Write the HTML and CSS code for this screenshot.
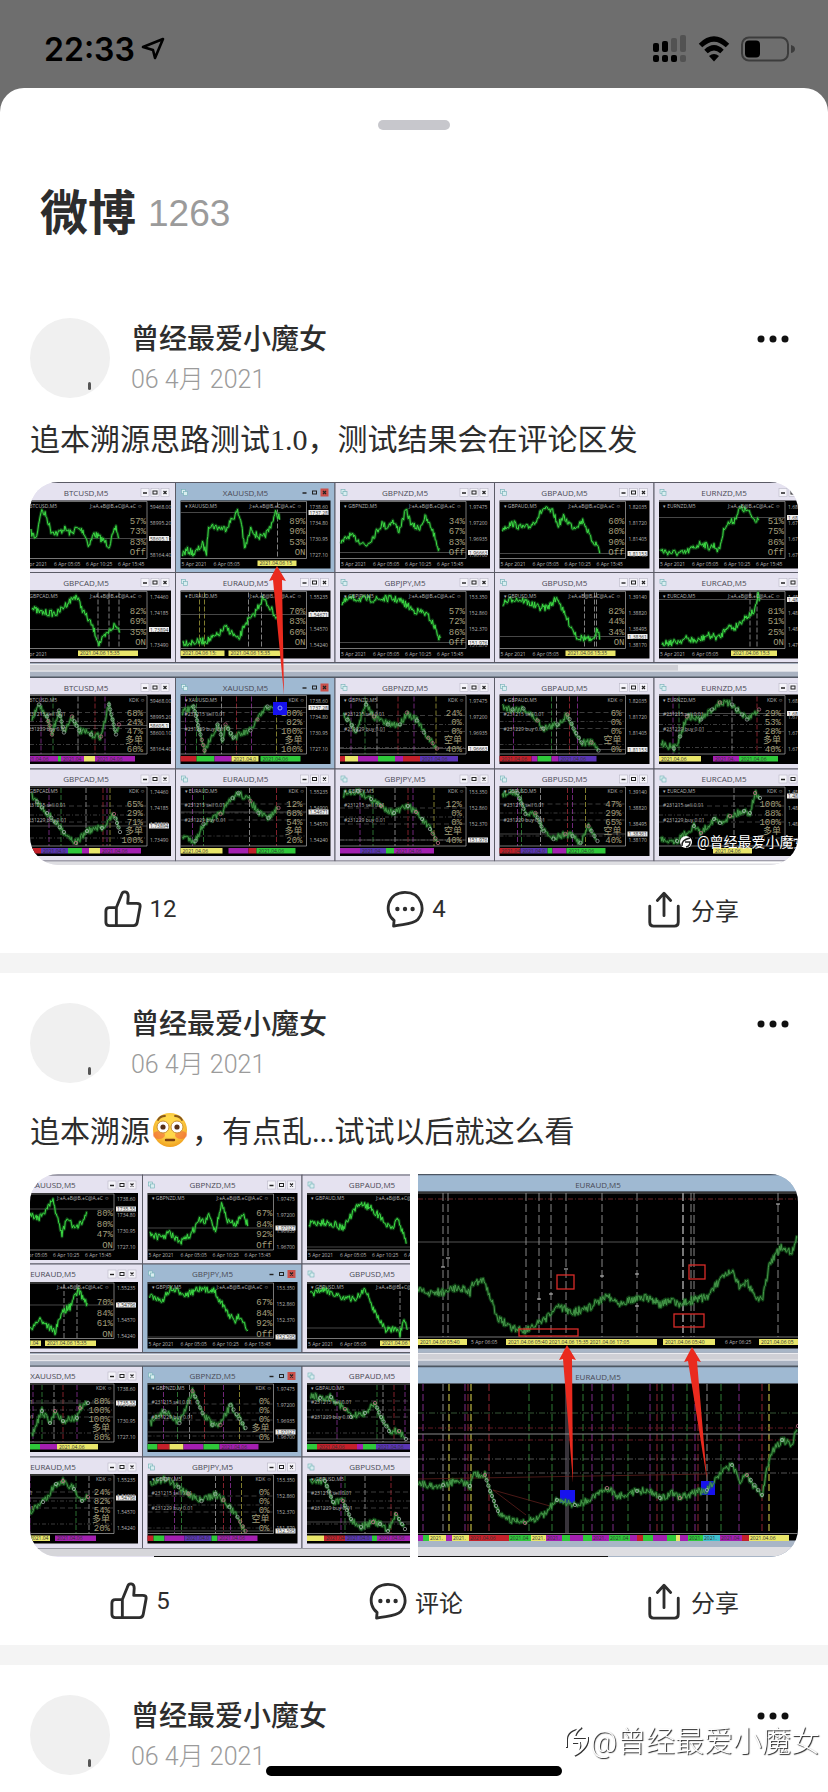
FILE: index.html
```
<!DOCTYPE html>
<html lang="zh-CN">
<head>
	<meta charset="UTF-8">
	<title>微博</title>
	<meta name="viewport" content="width=device-width, initial-scale=1.0">
	<link rel="stylesheet" href="styles.css">
</head>
<body>
	<!-- shared icons -->
	<svg class="sprite" aria-hidden="true">
		<symbol id="icon-like" viewBox="0 0 40 40">
			<path d="M13 18.500L18.500 5C19.500 .5 25.500 1 25.500 6.500L25 14H34.500Q38.500 14 38 17.500L35 34Q34.500 37.500 31 37.500H5.500Q2 37.500 2 34V22Q2 18.500 5.500 18.500H13V37.500"/>
		</symbol>
		<symbol id="icon-comment" viewBox="0 0 40 40">
			<path d="M8 38L8.500 32C-2.500 24 1 2.500 20 2.500C38 2.500 42.500 22 33.500 31C28 36.500 19 35.500 8 38Z"/>
			<g class="dots"><circle cx="12" cy="20" r="2.300"/><circle cx="20" cy="20" r="2.300"/><circle cx="28" cy="20" r="2.300"/></g>
		</symbol>
		<symbol id="icon-share" viewBox="0 0 40 40">
			<path d="M5 17V34Q5 38 9 38H31Q35 38 35 34V17M20 27V4M13 11L20 3.500L27 11"/>
		</symbol>
		<symbol id="icon-more" viewBox="0 0 32 8">
			<circle cx="4" cy="4" r="3.500"/><circle cx="16" cy="4" r="3.500"/><circle cx="28" cy="4" r="3.500"/>
		</symbol>
	</svg>

	<header class="status-bar">
		<div class="clock">
			<span>22:33</span>
			<svg width="24" height="24" viewBox="0 0 24 24"><path d="M22 2L14 21L12 13L2 10Z" fill="none" stroke="#000" stroke-width="2.600" stroke-linejoin="round"/></svg>
		</div>
		<div class="indicators">
			<svg width="36" height="28" viewBox="0 0 36 28">
				<rect x="1" y="8" width="6" height="9" rx="2"/><rect x="10" y="6" width="6" height="11" rx="2"/>
				<g opacity=".25"><rect x="19" y="3" width="6" height="14" rx="2"/><rect x="28" y="0" width="6" height="17" rx="2"/><rect x="28" y="20" width="6" height="7" rx="2"/></g>
				<rect x="1" y="20" width="6" height="7" rx="2"/><rect x="10" y="20" width="6" height="7" rx="2"/><rect x="19" y="20" width="6" height="7" rx="2"/>
			</svg>
			<svg width="32" height="26" viewBox="0 0 32 26">
				<path d="M2.500 9.500Q16 -3.500 29.500 9.500M8 15.500Q16 8 24 15.500" fill="none" stroke="#000" stroke-width="5"/>
				<path d="M11 20Q16 16 21 20L16 25.500Z"/>
			</svg>
			<svg width="56" height="26" viewBox="0 0 56 26">
				<rect x="2" y="1.500" width="46" height="23" rx="7" fill="none" stroke="#3c3c3c" stroke-width="2"/>
				<rect x="5" y="4.500" width="15" height="17" rx="4"/><path d="M51 9Q55 10 55 13T51 17Z" fill="#3c3c3c"/>
			</svg>
		</div>
	</header>

	<main class="sheet">
		<div class="handle"></div>
		<h1 class="title">微博 <span class="count">1263</span></h1>

		<article class="post">
			<div class="post-header">
				<div class="avatar"><span class="badge"></span></div>
				<div class="author">
					<h2 class="name">曾经最爱小魔女</h2>
					<p class="date">06 4月 2021</p>
				</div>
				<button class="more" aria-label="更多"><svg width="32" height="8"><use href="#icon-more"/></svg></button>
			</div>
			<p class="text">追本溯源思路测试1.0，测试结果会在评论区发</p>
			<div class="gallery">
				<svg id="chart-wall" viewBox="0 0 768 383"></svg>
			</div>
			<div class="actions">
				<button class="action"><svg class="icon"><use href="#icon-like"/></svg>12</button>
				<button class="action"><svg class="icon"><use href="#icon-comment"/></svg>4</button>
				<button class="action"><svg class="icon"><use href="#icon-share"/></svg>分享</button>
			</div>
		</article>

		<article class="post">
			<div class="post-header">
				<div class="avatar"><span class="badge"></span></div>
				<div class="author">
					<h2 class="name">曾经最爱小魔女</h2>
					<p class="date">06 4月 2021</p>
				</div>
				<button class="more" aria-label="更多"><svg width="32" height="8"><use href="#icon-more"/></svg></button>
			</div>
			<p class="text with-emoji">追本溯源<svg class="emoji" viewBox="0 0 36 36" role="img" aria-label="脸红">
				<defs><radialGradient id="face" cx=".5" cy=".4" r=".6"><stop offset=".5" stop-color="#ffd84a"/><stop offset="1" stop-color="#f0a020"/></radialGradient></defs>
				<circle cx="18" cy="18" r="17" fill="url(#face)"/>
				<ellipse cx="7" cy="23" rx="6" ry="4" fill="#f2683c" opacity=".6"/><ellipse cx="29" cy="23" rx="6" ry="4" fill="#f2683c" opacity=".6"/>
				<path d="M6 8Q8 4 13 4M23 4Q28 4 30 8" fill="none" stroke="#8a5a18" stroke-width="1.800" stroke-linecap="round"/>
				<circle cx="11" cy="15" r="6" fill="#fff" stroke="#c98d30"/><circle cx="25" cy="15" r="6" fill="#fff" stroke="#c98d30"/>
				<circle cx="11" cy="15" r="2.600" fill="#553018"/><circle cx="25" cy="15" r="2.600" fill="#553018"/>
				<path d="M14 28H22" stroke="#7a3d10" stroke-width="2.400" stroke-linecap="round"/>
			</svg>，有点乱...试试以后就这么看</p>
			<div class="gallery">
				<svg id="chart-crop" viewBox="0 0 380 383"></svg>
				<svg id="chart-euraud" viewBox="0 0 380 383"></svg>
			</div>
			<div class="actions">
				<button class="action"><svg class="icon"><use href="#icon-like"/></svg>5</button>
				<button class="action"><svg class="icon"><use href="#icon-comment"/></svg>评论</button>
				<button class="action"><svg class="icon"><use href="#icon-share"/></svg>分享</button>
			</div>
		</article>

		<article class="post">
			<div class="post-header">
				<div class="avatar"><span class="badge"></span></div>
				<div class="author">
					<h2 class="name">曾经最爱小魔女</h2>
					<p class="date">06 4月 2021</p>
				</div>
				<button class="more" aria-label="更多"><svg width="32" height="8"><use href="#icon-more"/></svg></button>
			</div>
		</article>
	</main>

	<div class="watermark">
		<svg width="28" height="36" viewBox="0 0 28 36"><g fill="none" stroke-width="2"><path d="M4 24V16Q4 6 19 4Q13 8 12 14H25Q26 24 12 32Q19 25 17 19H10" stroke="#333"/><path d="M3 23V15Q3 5 18 3Q12 7 11 13H24Q25 23 11 31Q18 24 16 18H9" stroke="#fff"/></g></svg>
		<span>@曾经最爱小魔女</span>
	</div>
	<div class="home-indicator"></div>

	<script src="charts.js"></script>
</body>
</html>
```
FILE: styles.css
```
* {
	box-sizing: border-box;
}

body {
	display: flex;
	flex-direction: column;
	min-height: 100vh;
	margin: 0;
	background-color: #6e6e6e;
	color: #2d2d2d;
	font-family: Roboto, "Noto Sans CJK SC", sans-serif;
}

h1,
h2,
p {
	margin: 0;
}

button {
	padding: 0;
	border: none;
	background: none;
	color: inherit;
	font: inherit;
}

.sprite {
	position: absolute;
	width: 0;
	height: 0;
}

/* status bar */
.status-bar {
	display: flex;
	justify-content: space-between;
	align-items: center;
	height: 88px;
	padding: 10px 32px 0 44px;
	color: #000;
}

.clock {
	display: flex;
	align-items: center;
	gap: 6px;
	font-family: Inter, sans-serif;
	font-size: 32px;
	font-weight: 600;
}

.indicators {
	display: flex;
	align-items: center;
	gap: 10px;
}

/* sheet */
.sheet {
	flex: 1;
	padding-top: 32px;
	border-radius: 24px 24px 0 0;
	background-color: #fff;
}

.handle {
	width: 72px;
	height: 10px;
	margin: 0 auto;
	border-radius: 5px;
	background-color: #c7c7cc;
}

.title {
	display: flex;
	align-items: center;
	gap: 12px;
	padding: 56px 40px 46px;
	font-size: 48px;
	font-weight: 700;
	line-height: 56px;
}

.count {
	color: #9b9b9b;
	font-family: "Liberation Sans", sans-serif;
	font-size: 37px;
	font-weight: 400;
}

/* posts */
.post {
	padding: 30px 30px 0;
	border-bottom: 20px solid #f4f4f4;
}

.post:last-child {
	padding-bottom: 16px;
	border-bottom: none;
}

.post-header {
	display: flex;
	gap: 21px;
	height: 80px;
}

.avatar {
	position: relative;
	width: 80px;
	height: 80px;
	border-radius: 50%;
	background-color: #f0f0f0;
}

.badge {
	position: absolute;
	right: 19px;
	bottom: 8px;
	width: 3px;
	height: 8px;
	border-radius: 2px;
	background-color: #555;
}

.author {
	flex: 1;
	padding-top: 2px;
	line-height: 40px;
}

.name {
	font-size: 28px;
	font-weight: 500;
}

.date {
	color: #9b9b9b;
	font-size: 25px;
	font-weight: 300;
}

.more {
	align-self: flex-start;
	height: 42px;
	margin-right: 9px;
}

.more svg {
	display: block;
	fill: #111;
}

.text {
	margin: 22px 0;
	font-family: "Liberation Serif", "Noto Sans CJK SC", serif;
	font-size: 30px;
	line-height: 40px;
}

.with-emoji {
	padding-top: 7px;
}

.emoji {
	width: 36px;
	height: 36px;
	margin: -2px 4px 0 2px;
	vertical-align: -6px;
}

.gallery {
	display: flex;
	gap: 8px;
	overflow: hidden;
	border-radius: 28px;
}

.gallery svg {
	display: block;
	flex: 1;
	min-width: 0;
}

.actions {
	display: grid;
	grid-template-columns: repeat(3, 1fr);
	height: 88px;
	margin: 0 -32px 0 -28px;
}

.action {
	display: flex;
	justify-content: center;
	align-items: center;
	gap: 8px;
	font-size: 24px;
}

.icon {
	width: 38px;
	height: 38px;
	fill: none;
	stroke: #2d2d2d;
	stroke-width: 3;
	stroke-linecap: round;
	stroke-linejoin: round;
}

.dots {
	fill: #2d2d2d;
	stroke: none;
}

/* overlays */
.watermark {
	position: fixed;
	right: 8px;
	bottom: 30px;
	display: flex;
	align-items: center;
	color: #fff;
	font-size: 29px;
	font-weight: 300;
	line-height: 40px;
	text-shadow: 1px 1px 1px #222;
}

.home-indicator {
	position: fixed;
	bottom: 16px;
	left: 50%;
	width: 296px;
	height: 10px;
	margin-left: -148px;
	border-radius: 5px;
	background-color: #000;
}

/* chart windows */
.win-title {
	fill: #4a4a55;
	font: 8px "Open Sans", sans-serif;
	text-anchor: middle;
}

.tiny {
	fill: #b4b4b4;
	font: 5px "Open Sans", sans-serif;
}

.percent {
	fill: #a39f7c;
	font: 9px "Liberation Mono", "Noto Sans CJK SC", monospace;
	text-anchor: end;
}

.dark {
	fill: #333;
}

.glow {
	fill: none;
	stroke: #1c7a26;
	stroke-width: 3;
	stroke-linejoin: round;
	opacity: 0.5;
}

.price-line {
	fill: none;
	stroke: #3ddc45;
	stroke-width: 1;
	stroke-linejoin: round;
}

.price-line.muted {
	stroke: #46994a;
}

.photo-mark {
	fill: #fff;
	font: 14px Roboto, "Noto Sans CJK SC", sans-serif;
}
```
FILE: charts.js
```
const PURPLE = "#a31fb0", GREEN = "#2fc83a", YELLOW = "#e9e66a", RED = "#c3202a", VIOLET = "#5a35b5";

let seed = 7;
function random() {
	seed = (seed * 16807) % 2147483647;
	return seed / 2147483647;
}

// spreads small price jumps along the key points
function pricePath(points, noise) {
	const out = [];
	for (let i = 0; i < points.length - 1; i++) {
		const [x1, y1] = points[i];
		const [x2, y2] = points[i + 1];
		const steps = Math.max(2, Math.round((x2 - x1) / 0.8));
		for (let s = 0; s < steps; s++) {
			const t = s / steps;
			const y = y1 + (y2 - y1) * t + (random() - 0.5) * noise;
			out.push((x1 + (x2 - x1) * t).toFixed(1) + "," + y.toFixed(1));
		}
	}
	return out.join(" ");
}

function priceLine(points, noise, muted) {
	const path = pricePath(points, noise);
	return `<polyline class="glow" points="${path}"/><polyline class="price-line ${muted ? "muted" : ""}" points="${path}"/>`;
}

function pairs(text) {
	return text.split(" ").map(p => p.split(",").map(Number));
}

function rect(x, y, w, h, fill, extra = "") {
	return `<rect x="${x}" y="${y}" width="${w}" height="${h}" fill="${fill}" ${extra}/>`;
}

function line(x1, y1, x2, y2, color, dash = "", width = 0.7) {
	return `<path d="M${x1} ${y1}L${x2} ${y2}" stroke="${color}" stroke-width="${width}" stroke-dasharray="${dash}"/>`;
}

function text(x, y, value, cls) {
	return `<text x="${x}" y="${y}" class="${cls}">${value}</text>`;
}

function markers(points) {
	let s = "";
	points.forEach(([x, y], i) => {
		if (i === 0) return;
		const [px, py] = points[i - 1];
		const n = y - py > 12 ? Math.round((y - py) / 5) : 1;
		for (let k = 1; k <= n; k++) {
			const color = i % 3 ? "#aab8b4" : "#c9708c";
			s += `<circle cx="${px + (x - px) * k / n}" cy="${py + (y - py) * k / n}" r="1.7" fill="none" stroke="${color}" stroke-width=".7"/>`;
		}
	});
	return s;
}

function drawWindow(x, y, h, w) {
	const top = w.orders ? 17 : 18;
	const ch = h - 22;
	let s = `<g transform="translate(${x} ${y})">`;
	s += rect(0, 0, 159.5, h, w.active ? "#9fb9d2" : "#e5e2f0", 'stroke="#5b5b66" stroke-width="1"');
	s += text(70, 13, w.name + ",M5", "win-title");
	s += rect(6, 7, 4, 4, "#d9eef0", 'stroke="#70aeb4" stroke-width=".6"') + rect(8, 9, 4, 4, "#d9eef0", 'stroke="#70aeb4" stroke-width=".6"');
	[125, 135, 145].forEach((bx, i) => {
		const fill = w.active ? (i === 2 ? "#c9504a" : "#9fb9d2") : "#f5f4fa";
		s += rect(bx, 6, 8, 8, fill, w.active ? "" : 'stroke="#b9b7c6" stroke-width=".6"');
	});
	s += line(127, 10.5, 131, 10.5, "#222", "", 1.4) + rect(137, 8.5, 4, 3, "none", 'stroke="#222"');
	s += '<path d="M147.500 8.500l3 3m0-3l-3 3" stroke="#222" stroke-width="1.2"/>';
	s += `<g transform="translate(5 ${top})">` + rect(0, 0, 150, ch, "#000");
	const base = ch - 10;

	// order windows carry coloured guides, plain ones just a few grey ones
	const guides = w.guides || [];
	guides.forEach(([gx, color]) => { s += line(gx, 2, gx, base, color, "5 2", 0.9); });
	if (w.orders) {
		[18, 27, 34, 50].forEach((gy, i) => {
			const ly = gy + (w.name.charCodeAt(3) % 5);
			s += line(0, ly, 126, ly, "#777", i % 2 ? "4 2 1 2" : "5 3", 0.5);
		});
	}
	s += line(0, w.price, 126, w.price, "#777", "", 0.6);
	s += line(0, 1, 126, 1, "#999") + line(126, 1, 126, base, "#aaa") + line(0, base, 126, base, "#aaa");
	s += priceLine(w.points, w.orders ? 7 : 7, w.orders);
	if (w.orders) {
		s += markers(w.points);
		s += text(4, 21, "#231215 sell 0.01", "tiny") + text(4, 36, "#231229 buy 0.01", "tiny");
	}
	s += text(4, 7, "▾ " + w.name + ",M5", "tiny");
	s += text(w.orders ? 108 : 69, 7, w.orders ? "KDK ☺" : "J:±A,±B@B,±C@A,±C ☺", "tiny");
	w.pct.forEach((p, i) => {
		const step = w.orders ? 9 : 10.5;
		s += text(w.orders ? 122 : 125, (w.orders ? 21 : 23) + i * step, p, "percent");
	});
	w.axis.forEach((a, i) => { s += text(129, 8 + i * 16, a, "tiny"); });
	s += rect(128, w.price - 2.5, 20, 5, "#eee") + text(129, w.price + 2, w.tag, "tiny dark");
	if (w.bands) {
		w.bands.forEach(([bx, bw, color]) => { s += rect(bx, base + 2, bw, 5.5, color) + (bw > 20 ? text(bx + 2, base + 6.5, "2021.04.06".slice(0, Math.floor(bw / 3)), "tiny dark") : ""); });
	}
	if (!w.orders) {
		const yellow = w.yellow || [];
		["5 Apr 2021", "6 Apr 05:05", "6 Apr 10:25", "6 Apr 15:45"].forEach((d, i) => {
			const dx = 1 + i * 32;
			if (!yellow.some(([bx, bw]) => dx < bx + bw && dx + 26 > bx)) s += text(dx, base + 7, d, "tiny");
		});
		yellow.forEach(([bx, bw]) => {
			s += rect(bx, base + 2, bw, 5.5, YELLOW) + text(bx + 2, base + 6.5, "2021.04.06 15:35".slice(0, Math.floor(bw / 3)), "tiny dark");
		});
	}
	return s + "</g></g>";
}

function scrollBar(y, h, w, thumb) {
	return rect(0, y, w, h, "#a9b2c1") + rect(0, y + 1, w, h * 0.55, "#ececf0") + rect(0, y + 2, thumb, h * 0.4, "#cfcfd5") +
		line(0, y + h, w, y + h, "#4c5663", "", 1.2);
}

function arrow(tipX, tipY, endX, endY) {
	return `<path d="M${tipX} ${tipY}L${tipX + 9} ${tipY + 15}L${tipX + 5} ${tipY + 14}L${endX} ${endY}L${tipX - 4} ${tipY + 14}L${tipX - 8} ${tipY + 15}Z" fill="#ea2a1e"/>`;
}

const P = "#7c2a86", G = "#2f7a35", W = "#8d8d8d", R = "#8e2430", Y = "#8f8a33";

function orderGuides(...xs) {
	const colors = [P, G, W, R, P, Y];
	return xs.map((x, i) => [x, colors[i % colors.length]]);
}

function win(name, points, pct, axis, tag, price, more = {}) {
	return Object.assign({ name, points: pairs(points), pct: pct.split(" "), axis: axis.split(" "), tag, price }, more);
}

const AX = {
	btc: "59468.00 58995.20 58600.10 58164.40", xau: "1738.60 1734.80 1730.95 1727.10", nzd: "1.97475 1.97200 1.96935 1.96700",
	aud: "1.82035 1.81720 1.81405 1.81100", enz: "1.68 1.67 1.67 1.67", cad: "1.74460 1.74185 1.73800 1.73490",
	eau: "1.55235 1.54900 1.54570 1.54240", jpy: "153.350 152.860 152.370 151.870", usd: "1.39140 1.38820 1.38495 1.38170", eca: "1.48 1.48 1.48 1.47"
};

const usdLine = "3,13 14,8 24,10 39,17 48,17 58,7 64,22 71,35 78,47 88,48 93,52 97,40 101,48";
const ordAud = "3,12 13,15 24,14 38,26 44,34 58,30 68,20 74,34 82,48 92,48 99,56";
const ordEur = "2,50 15,55 23,38 40,28 52,12 58,7 70,15 78,27 88,32 98,22";
const ordJpy = "3,8 18,5 31,13 41,20 54,27 68,20 76,26 82,33 90,43 98,57";
const ordUsd = "3,8 18,7 26,28 36,27 44,45 54,53 66,48 73,50 81,57 89,40 98,55";

const wall = [
	[
		win("BTCUSD", "10,32 15,38 20,10 25,15 30,30 37,33 43,28 50,33 55,28 62,30 68,45 73,33 80,38 88,45 95,27 99,42", "57% 73% 83% Off", AX.btc, "58605.11", 38),
		win("XAUUSD", "2,53 7,50 14,53 22,44 26,52 28,24 37,27 45,28 57,11 61,22 64,49 71,27 75,34 82,38 88,30 95,13 100,17", "89% 90% 53% ON", AX.xau, "1737.28", 12, { active: true, yellow: [[77, 39]], guides: [[97, W]] }),
		win("GBPNZD", "1,43 9,35 16,38 26,45 34,35 42,23 47,27 52,20 59,30 66,10 72,25 79,28 85,17 92,28 100,53", "34% 67% 83% Off", AX.nzd, "1.96663", 52),
		win("GBPAUD", "3,28 8,25 14,23 21,27 29,27 36,20 44,8 54,12 58,25 64,17 74,27 84,20 91,38 98,45 101,53", "60% 80% 90% Off", AX.aud, "1.81153", 53),
		win("EURNZD", "1,50 11,52 25,53 35,47 43,42 50,47 55,45 60,50 63,37 66,25 75,20 81,8 88,10 96,20 101,15", "51% 75% 86% Off", AX.enz, "1.68", 17)
	],
	[
		win("GBPCAD", "11,18 20,22 36,23 46,13 55,5 63,22 71,35 78,53 85,45 93,35 100,40", "82% 69% 35% ON", AX.cad, "1.73894", 39, { yellow: [[57, 60]], guides: [[77, W], [88, W], [98, W]] }),
		win("EURAUD", "2,52 13,52 27,50 37,45 45,37 52,43 58,50 65,32 72,27 82,8 88,15 97,28", "70% 83% 60% ON", AX.eau, "1.54671", 24, { yellow: [[0, 44], [48, 52]], guides: [[19, Y], [24, Y], [68, W], [81, W]] }),
		win("GBPJPY", "2,13 10,8 34,9 50,8 60,10 70,17 73,20 84,22 90,28 95,37 101,52", "57% 72% 86% Off", AX.jpy, "151.976", 52),
		win("GBPUSD", usdLine, "82% 44% 34% ON", AX.usd, "1.38361", 46, { yellow: [[66, 50]], guides: [[85, W], [95, W], [97, W]] }),
		win("EURCAD", "3,52 15,52 28,48 38,51 48,45 61,47 68,35 75,38 85,28 96,20 99,5 101,10", "81% 51% 25% ON", AX.eca, "1.48", 9, { yellow: [[72, 46]], guides: [[91, W], [98, W]] })
	],
	[
		win("BTCUSD", "11,26 18,10 26,22 31,40 38,16 43,38 51,22 58,36 70,40 80,42 88,10 95,40 98,30", "68% 24% 47% 多单 60%", AX.btc, "58605.11", 31, { bands: [[0, 37, PURPLE], [37, 3, GREEN], [40, 23, PURPLE], [63, 11, YELLOW], [74, 40, PURPLE]], guides: orderGuides(20, 32, 57, 74, 84) }),
		win("XAUUSD", "2,18 13,12 20,40 24,56 37,30 42,45 45,30 53,43 70,36 77,25 87,12 97,18 101,12", "100% 82% 100% 多单 100%", AX.xau, "1737.28", 13, { active: true, bands: [[0, 16, RED], [16, 18, GREEN], [34, 17, PURPLE], [51, 27, YELLOW], [80, 40, GREEN]], guides: orderGuides(5, 16, 41, 56, 71, 96) }),
		win("GBPNZD", "3,20 16,36 26,10 34,22 48,30 60,30 67,18 77,26 84,38 97,54", "24% 0% 0% 空单 40%", AX.nzd, "1.96663", 54, { bands: [[0, 5, RED], [5, 13, YELLOW], [18, 20, PURPLE], [38, 17, GREEN], [55, 8, PURPLE], [63, 17, RED], [80, 38, VIOLET]], guides: orderGuides(11, 25, 37, 58, 74, 96) }),
		win("GBPAUD", ordAud, "6% 0% 0% 空单 0%", AX.aud, "1.81153", 55, { bands: [[0, 32, RED], [32, 6, PURPLE], [38, 14, GREEN], [52, 7, PURPLE], [59, 38, VIOLET]], guides: orderGuides(14, 52, 57, 70, 78) }),
		win("EURNZD", "2,48 15,54 21,42 28,22 42,25 53,15 61,8 73,10 88,25 100,15", "29% 53% 28% 多单 40%", AX.enz, "1.68", 19, { bands: [[0, 42, YELLOW], [54, 26, PURPLE], [80, 39, GREEN]], guides: orderGuides(14, 20, 73, 98) })
	],
	[
		win("GBPCAD", "11,10 26,27 43,46 55,57 66,45 81,42 93,28 99,46", "65% 29% 71% 多单 100%", AX.cad, "1.73894", 40, { bands: [[0, 20, RED], [20, 27, VIOLET], [47, 14, GREEN], [61, 7, PURPLE], [68, 11, YELLOW], [79, 41, PURPLE]], guides: orderGuides(28, 40, 65, 82, 86, 89) }),
		win("EURAUD", ordEur, "12% 68% 54% 多单 20%", AX.eau, "1.54671", 26, { bands: [[0, 42, YELLOW], [48, 20, PURPLE], [68, 8, RED], [76, 39, GREEN]], guides: orderGuides(12, 23, 69, 96) }),
		win("GBPJPY", ordJpy, "12% 0% 0% 空单 40%", AX.jpy, "151.976", 54, { bands: [[0, 20, PURPLE], [20, 26, VIOLET], [46, 8, GREEN], [54, 40, PURPLE]], guides: orderGuides(20, 33, 55, 68, 73, 94) }),
		win("GBPUSD", ordUsd, "47% 29% 65% 空单 40%", AX.usd, "1.38361", 48, { bands: [[0, 21, RED], [21, 27, VIOLET], [48, 5, GREEN], [53, 14, PURPLE], [67, 39, GREEN]], guides: orderGuides(18, 22, 41, 68, 73, 86) }),
		win("EURCAD", "2,53 18,55 35,40 42,47 55,33 61,37 71,30 85,25 91,27 96,7 101,12", "100% 88% 100% 多单", AX.eca, "1.48", 10, { bands: [[54, 39, YELLOW]], guides: [[75, W]] })
	]
];

const crop = [
	[
		win("XAUUSD", "42,22 52,25 65,8 74,42 79,25 85,33 90,35 100,18", "80% 80% 47% ON", AX.xau, "1735.55", 16),
		win("GBPNZD", "2,40 13,45 22,40 33,50 43,42 52,27 57,30 62,22 68,38 74,10 80,28 88,32 94,20 101,33", "67% 84% 92% Off", AX.nzd, "1.97027", 35),
		win("GBPAUD", "2,30 14,30 24,30 36,35 44,23 53,10 64,15 74,25 84,37 91,25 100,53", "60% 80% 90% Off", AX.aud, "1.81153", 54)
	],
	[
		win("EURAUD", "42,47 52,37 67,50 74,30 82,25 90,8 100,23", "70% 84% 61% ON", AX.eau, "1.54796", 23, { yellow: [[30, 23], [57, 51]], guides: [[76, W], [89, W]] }),
		win("GBPJPY", "2,13 13,20 23,8 40,12 50,8 67,8 73,20 80,30 87,40 93,33 101,53", "67% 84% 92% Off", AX.jpy, "152.595", 55, { active: true }),
		win("GBPUSD", usdLine, "82% 44% 34% ON", AX.usd, "1.38361", 46, { yellow: [[73, 50]], guides: [[93, W]] })
	],
	[
		win("XAUUSD", "44,52 54,28 62,40 67,28 75,38 89,35 92,25 100,20", "80% 100% 100% 多单 80%", AX.xau, "1735.55", 20, { bands: [[40, 12, GREEN], [52, 17, PURPLE], [69, 41, YELLOW]], guides: orderGuides(45, 54, 66, 75, 89) }),
		win("GBPNZD", "3,40 17,28 32,40 45,8 55,30 65,42 73,42 83,22 98,45", "0% 0% 0% 多单 0%", AX.nzd, "1.97027", 49, { active: true, bands: [[0, 10, GREEN], [10, 12, RED], [22, 14, YELLOW], [36, 20, PURPLE], [56, 16, GREEN], [72, 39, PURPLE]], guides: orderGuides(16, 30, 42, 57, 76, 92) }),
		win("GBPAUD", ordAud, "6% 0% 0% 空单 0%", AX.aud, "1.81153", 56, { bands: [[0, 10, GREEN], [10, 40, RED], [50, 6, PURPLE], [56, 13, GREEN], [69, 50, VIOLET]], guides: orderGuides(30, 70, 76, 87, 98) })
	],
	[
		win("EURAUD", "42,38 55,28 68,10 75,7 86,15 94,27 100,23", "24% 82% 54% 多单 20%", AX.eau, "1.54796", 24, { bands: [[40, 22, YELLOW], [67, 41, PURPLE]], guides: orderGuides(42, 88, 101) }),
		win("GBPJPY", ordJpy, "0% 0% 0% 空单 0%", AX.jpy, "152.595", 57, { bands: [[0, 6, RED], [6, 11, GREEN], [17, 20, PURPLE], [37, 27, VIOLET], [64, 6, GREEN], [70, 40, PURPLE]], guides: orderGuides(27, 34, 68, 76, 83, 94) }),
		win("GBPUSD", ordUsd, "47% 29% 65% 空单 40%", AX.usd, "1.38361", 48, { bands: [[0, 17, YELLOW], [17, 21, RED], [38, 27, VIOLET], [65, 5, GREEN], [70, 36, PURPLE]], guides: orderGuides(34, 38, 58, 84) })
	]
];

function drawWall(rows, x0, tops, heights) {
	return rows.map((row, r) => row.map((w, c) => {
		if (r > 1) w.orders = true;
		return drawWindow(x0 + c * 159.5, tops[r], heights[r], w);
	}).join("")).join("");
}

document.getElementById("chart-wall").innerHTML =
	rect(0, 0, 768, 383, "#e5e2f0") +
	drawWall(wall, -14, [0.5, 90.5, 195.5, 287], [90, 90, 91.5, 92]) +
	scrollBar(181, 14, 768, 648) + rect(0, 379.5, 768, 4, "#dedee2") + rect(650, 379.5, 118, 2, "#fff") +
	rect(243, 220, 14, 13, "#1712ee") + '<circle cx="250" cy="226" r="2" fill="none" stroke="#8da0ff"/>' +
	arrow(247, 84, 254, 213) +
	'<circle cx="656" cy="360" r="6" fill="#fff"/><path d="M652 364q-1-6 8-8m-5 4h5q0 4-4 5" fill="none" stroke="#222" stroke-width="1.4"/>' +
	text(667, 365, "@曾经最爱小魔女", "photo-mark");

document.getElementById("chart-crop").innerHTML =
	rect(0, 0, 380, 383, "#e5e2f0") +
	drawWall(crop, -47, [1, 90, 192, 283], [89, 88.5, 91, 91.5]) +
	scrollBar(179, 13, 380, 380) + rect(0, 374.5, 380, 7.500, "#d6d6da") + rect(124, 382, 256, 1, "#111");

// one wide EURAUD chart, drawn twice: plain above, with orders below
const wide = pairs("0,116 12,119 25,118 42,113 52,119 55,108 67,108 72,124 80,144 92,153 107,156 125,148 139,133 149,136 157,138 172,133 189,121 200,129 219,124 232,124 242,131 255,126 262,131 275,126 289,123 302,106 314,98 322,114 329,108 335,118 344,128 352,88 364,73 374,78 380,59");

function wideFrame(top) {
	return rect(0, top, 380, 17, "#9fb9d2") + line(0, top, 380, top, "#4c5663", "", 1.5) +
		text(180, top + 13, "EURAUD,M5", "win-title") + rect(0, top + 17, 380, 157, "#000");
}

function drawWide() {
	let s = rect(0, 0, 380, 383, "#a8b5c6") + wideFrame(0.5) + wideFrame(192.5);
	s += line(0, 19, 380, 19, "#999") + line(0, 163, 380, 163, "#aaa");
	s += line(0, 25, 380, 25, "#9c3438", "5 2 1 2") + line(0, 68, 380, 68, "#777");
	[25, 30, 108, 121, 133, 148, 184, 219, 265, 273, 276, 360].forEach(x => {
		s += line(x, 19, x, 163, "#969696", "8 3", x === 265 ? 1.6 : 0.9);
	});
	[[25, 93], [30, 84], [121, 125], [133, 120], [148, 95], [184, 102], [219, 100], [219, 132], [360, 30]].forEach(([x, y]) => {
		s += line(x - 2, y, x + 2, y, "#ccc", "", 1);
	});
	s += priceLine(wide, 8, true);
	[[0, 49], [88, 151], [245, 52], [341, 39]].forEach(([x, w]) => {
		s += rect(x, 165, w, 6, YELLOW) + text(x + 2, 170, "2021.04.06 05:40 2021.04.06 15:35 2021.04.06 17:05".slice(0, Math.floor(w / 3)), "tiny dark");
	});
	s += text(53, 170, "5 Apr 06:05", "tiny") + text(307, 170, "6 Apr 06:25", "tiny");
	[[139, 101, 17, 14], [271, 91, 16, 14], [101, 155, 59, 7], [256, 140, 30, 13]].forEach(b => {
		s += rect(...b, "none", 'stroke="#d92c28" stroke-width="1.3"');
	});

	// lower half
	const guides = [[5, P], [25, W], [31, Y], [47, P], [50, R], [53, Y], [71, R], [111, G], [134, G], [165, G], [174, P], [184, G], [195, P], [210, G], [232, P], [239, R], [244, G], [255, P], [269, G], [277, P], [280, R], [289, W], [303, G], [321, P], [344, R], [351, Y]];
	s += rect(147, 209, 4, 150, "#37333a");
	guides.forEach(([x, color]) => { s += line(x, 210, x, 359, color, "7 3", color === Y ? 1.6 : 1); });
	s += line(0, 239, 380, 239, "#4c7a4c", "6 2 1 2") + line(0, 254, 380, 254, "#8e2430", "5 2 1 2") + line(0, 260, 380, 260, "#999", "", 0.9) +
		line(0, 266, 380, 266, "#8e2430", "5 2 1 2") + line(0, 285, 380, 285, "#777", "6 2 1 2") + line(0, 299, 380, 299, "#777", "6 2 1 2") +
		line(0, 305, 290, 300, "#6c2320") + line(75, 316, 132, 332, "#6c2320") + line(75, 316, 108, 341, "#6c2320");
	s += rect(142, 316, 15, 13, "#1712ee") + rect(283, 307, 14, 14, "#1712ee");
	s += '<g transform="translate(0 193)">' + priceLine(wide, 7, true);
	s += markers(wide.filter((p, i) => i % 2 === 0 || (i > 5 && i < 9))) + "</g>";
	s += line(0, 359.5, 380, 359.5, "#aaa");
	const bands = [[5, PURPLE], [6, GREEN], [17, YELLOW], [6, PURPLE], [17, YELLOW], [40, RED], [22, GREEN], [15, YELLOW], [16, PURPLE], [8, GREEN], [13, PURPLE], [9, GREEN], [17, PURPLE], [21, GREEN], [7, PURPLE], [6, RED], [10, GREEN], [14, PURPLE], [9, GREEN], [4, YELLOW], [8, PURPLE], [15, GREEN], [17, "#3fc0cf"], [22, PURPLE], [7, RED], [40, YELLOW]];
	let x = 0;
	bands.forEach(([w, color]) => {
		s += rect(x, 361, w, 6, color) + (w > 14 ? text(x + 1, 366, "2021.04.06".slice(0, Math.floor(w / 3)), "tiny dark") : "");
		x += w;
	});
	s += scrollBar(178, 14, 380, 380) + rect(0, 369, 380, 14, "#a8b5c6") + rect(0, 373, 380, 9, "#dedee2") + rect(0, 382, 190, 1, "#111");
	return s + arrow(149, 171, 155, 309) + arrow(274, 173, 289, 306);
}

document.getElementById("chart-euraud").innerHTML = drawWide();
```
